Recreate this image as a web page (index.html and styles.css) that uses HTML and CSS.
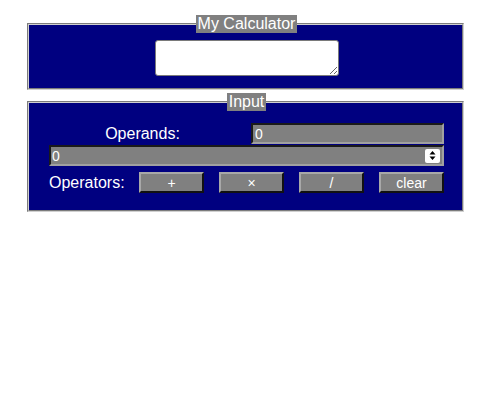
FILE: index.html
```html
<!DOCTYPE html>
<html>
<head>
<meta charset="utf-8">
<link rel="stylesheet" href="styles.css">
</head>
<body>
<div class="calc">
  <fieldset class="box display">
    <legend class="title">My Calculator</legend>
    <div class="center">
      <textarea class="screen"></textarea>
    </div>
  </fieldset>
  <fieldset class="box input-box">
    <legend class="title">Input</legend>
    <div class="row operands">
      <label class="lbl">Operands:</label>
      <input class="field short" type="text" value="0">
    </div>
    <div class="field numbox">
      <input class="bare" type="text" value="0">
      <span class="spin">
        <svg width="7" height="9" viewBox="0 0 7 9"><path d="M3.5 0 L6.5 3.5 L0.5 3.5 Z M0.5 5.5 L6.5 5.5 L3.5 9 Z" fill="#000"/></svg>
      </span>
    </div>
    <div class="row ops">
      <span class="lbl-ops">Operators:</span>
      <div class="btns">
        <button class="btn">+</button>
        <button class="btn">×</button>
        <button class="btn">/</button>
        <button class="btn">clear</button>
      </div>
    </div>
  </fieldset>
</div>
</body>
</html>
```
FILE: styles.css
```css
body {
  margin: 8px;
  font-family: "Liberation Sans", Arial, sans-serif;
  background: #fff;
}
.calc {
  width: 437px;
  margin-left: 19px;
  padding-top: 7px;
}
.box {
  margin: 0;
  background: #000080;
  border: 2px groove #d0d0d0;
  padding: 7px 18px 12px 20px;
  min-width: 0;
}
.title {
  margin: 0 auto;
  padding: 0 2px;
  background: #808080;
  color: #fff;
  font-size: 16px;
  line-height: 18px;
}
.center {
  display: flex;
  justify-content: center;
}
.screen {
  display: block;
  margin: 0;
  width: 184px;
  height: 36px;
  box-sizing: border-box;
  background: #fff;
  border: 1px solid #7a7a7a;
  border-radius: 3px;
  padding: 2px;
}
.input-box {
  margin-top: 3px;
  padding: 12px 18px 17px 20px;
}
.row {
  display: flex;
  align-items: center;
}
.operands {
  gap: 15px;
  margin-bottom: 1px;
}
.lbl {
  flex: 1;
  text-align: center;
  color: #fff;
  font-size: 16px;
}
.field {
  box-sizing: border-box;
  height: 21px;
  background: #808080;
  color: #fff;
  font-family: "Liberation Sans", Arial, sans-serif;
  font-size: 14px;
  border-style: solid;
  border-width: 2px;
  border-color: #1a1a1a #a0a0a0 #a0a0a0 #1a1a1a;
  padding: 0 2px;
  margin: 0;
  outline: none;
}
.short {
  width: 193px;
}
.numbox {
  display: flex;
  align-items: center;
  width: 100%;
  padding: 0 2px 0 1px;
}
.bare {
  flex: 1;
  min-width: 0;
  border: 0;
  background: transparent;
  color: #fff;
  font-family: "Liberation Sans", Arial, sans-serif;
  font-size: 14px;
  padding: 0;
  margin: 0;
  outline: none;
}
.spin {
  width: 15px;
  height: 14px;
  background: #fff;
  border-radius: 2px;
  display: flex;
  align-items: center;
  justify-content: center;
}
.spin svg {
  display: block;
}
.ops {
  margin-top: 6px;
}
.lbl-ops {
  width: 90px;
  color: #fff;
  font-size: 16px;
}
.btns {
  flex: 1;
  display: flex;
  justify-content: space-between;
}
.btn {
  width: 65px;
  height: 21px;
  box-sizing: border-box;
  margin: 0;
  padding: 0;
  background: #808080;
  color: #fff;
  font-family: "Liberation Sans", Arial, sans-serif;
  font-size: 14px;
  border-style: solid;
  border-width: 2px;
  border-color: #a8a8a8 #111 #111 #a8a8a8;
}
```
